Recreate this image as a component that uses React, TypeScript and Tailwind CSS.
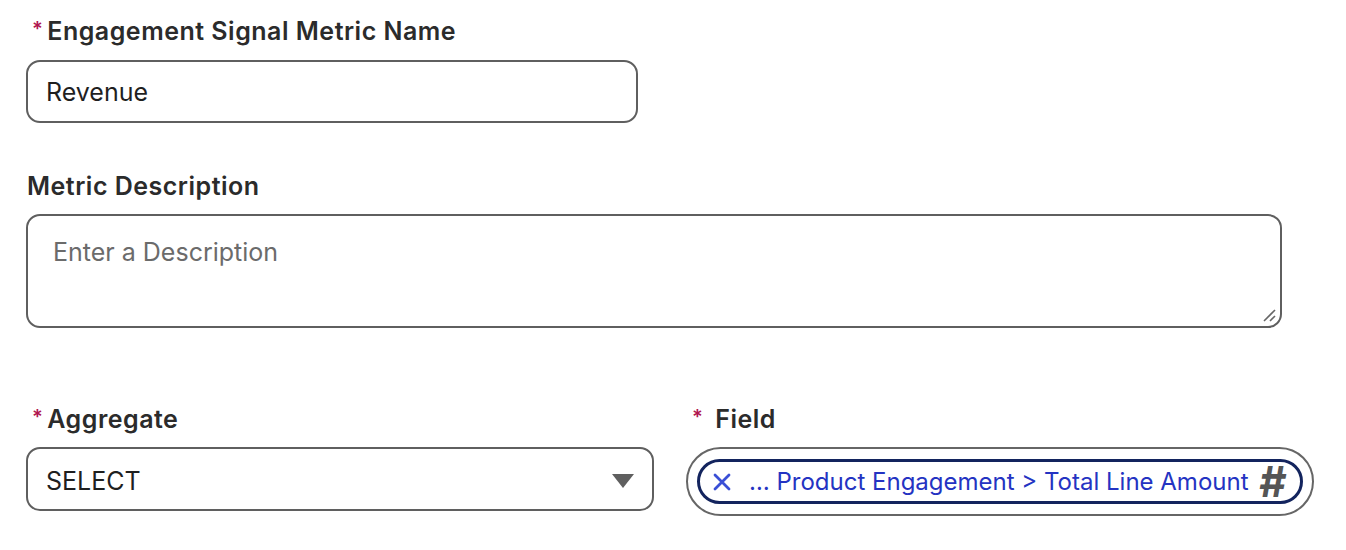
import React from "react";

function Req() {
  return <span className="text-[#b0164f] text-[20px] leading-none mr-[4px] relative top-[-3px]">*</span>;
}

export default function App() {
  return (
    <div className="w-[1346px] h-[550px] bg-white text-[#2b2b2b] font-['Inter',sans-serif] relative">
      <div className="pl-[26px] pt-[16px]">
        <div className="flex items-center h-[32px] pl-[6px] text-[25px] font-semibold tracking-[0.5px]">
          <Req />
          <span>Engagement Signal Metric Name</span>
        </div>
        <div className="mt-[12px] w-[612px] h-[63px] border-2 border-[#5f5f5f] rounded-[14px] flex items-center pl-[18px] pt-[2px] text-[25px] text-[#1f1f1f]">
          Revenue
        </div>

        <div className="mt-[48px] flex items-center h-[32px] pl-[1px] text-[25px] font-semibold tracking-[0.5px]">
          Metric Description
        </div>
        <div className="mt-[11px] w-[1256px] h-[114px] border-2 border-[#5f5f5f] rounded-[14px] relative pl-[25px] pt-[18px] text-[25px] text-[#6b6b6b]">
          Enter a Description
          <svg className="absolute right-[3px] bottom-[3px]" width="16" height="16" viewBox="0 0 16 16">
            <path d="M14 3 L3 14" stroke="#666" strokeWidth="1.6" />
            <path d="M14 9 L9 14" stroke="#666" strokeWidth="1.6" />
          </svg>
        </div>

        <div className="mt-[76px] flex gap-[32px]">
          <div className="w-[628px]">
            <div className="flex items-center h-[32px] pl-[6px] text-[25px] font-semibold tracking-[0.5px]">
              <Req />
              <span>Aggregate</span>
            </div>
            <div className="mt-[11px] w-[628px] h-[64px] border-2 border-[#5f5f5f] rounded-[14px] flex items-center justify-between pl-[18px] pr-[18px] text-[25px] text-[#1f1f1f]">
              <span className="pt-[5px]">SELECT</span>
              <svg width="22" height="14" viewBox="0 0 22 14" className="mt-[4px]">
                <path d="M0 0 H22 L11 14 Z" fill="#5f5f5f" />
              </svg>
            </div>
          </div>
          <div className="w-[628px]">
            <div className="flex items-center h-[32px] pl-[6px] text-[25px] font-semibold tracking-[0.5px]">
              <Req />
              <span className="ml-[8px]">Field</span>
            </div>
            <div className="mt-[11px] w-[628px] h-[69px] border-2 border-[#666] rounded-full flex items-center px-[9px]">
              <div className="w-full h-[45px] rounded-full border-[3px] border-[#13245e] flex items-center pl-[12px] pr-[14px] text-[24px] text-[#2433c2]">
                <svg width="20" height="20" viewBox="0 0 20 20" className="shrink-0">
                  <path d="M3 3 L17 17 M17 3 L3 17" stroke="#3a4fd6" strokeWidth="2.8" strokeLinecap="round" />
                </svg>
                <span className="ml-[17px] flex-1 whitespace-nowrap">… Product Engagement &gt; Total Line Amount</span>
                <span className="text-[42px] font-bold italic text-[#555] leading-none">#</span>
              </div>
            </div>
          </div>
        </div>
      </div>
    </div>
  );
}
